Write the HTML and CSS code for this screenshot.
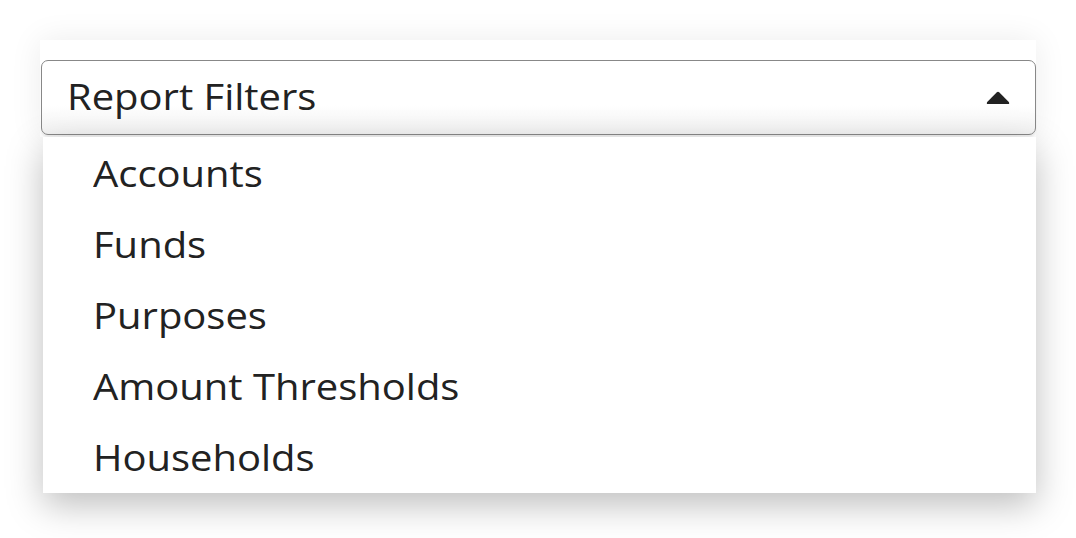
FILE: index.html
```html
<!DOCTYPE html>
<html lang="en">
<head>
<meta charset="UTF-8">
<meta name="viewport" content="width=device-width, initial-scale=1.0">
<title>Report Filters</title>
<link rel="stylesheet" href="styles.css">
</head>
<body>

<div class="filter-panel">
    <div class="filter-head">
        <div class="filter-select">
            <span class="filter-label wide">Report Filters</span>
            <svg class="caret" width="24" height="14" viewBox="0 0 24 14">
                <path d="M10.6 1.4 Q12 0 13.4 1.4 L22.8 11 Q24 13 22 13 L2 13 Q0 13 1.2 11 Z" fill="#222"/>
            </svg>
        </div>
    </div>
    <ul class="filter-menu">
        <li><span class="wide">Accounts</span></li>
        <li><span class="wide">Funds</span></li>
        <li><span class="wide">Purposes</span></li>
        <li><span class="wide">Amount Thresholds</span></li>
        <li><span class="wide">Households</span></li>
    </ul>
</div>

</body>
</html>
```

FILE: styles.css
```css
body {
    margin: 0;
    padding: 40px 0 46px 40px;
    background: #fff;
    font-family: "Open Sans", "Noto Sans", sans-serif;
    color: #222;
}
.filter-panel {
    width: 996px;
}
.filter-head {
    padding: 20px 0 2px 1px;
    background: #fff;
    box-shadow: 0 0 30px rgba(0, 0, 0, 0.08);
}
.filter-select {
    display: flex;
    align-items: center;
    justify-content: space-between;
    box-sizing: border-box;
    height: 75px;
    padding: 0 25px 0 25px;
    border: 1px solid #888;
    border-radius: 7px;
    background: linear-gradient(#fff 60%, #f3f3f3);
    box-shadow: 0 2px 2px rgba(0, 0, 0, 0.07);
}
.filter-label {
    font-size: 36px;
    margin-bottom: 2px;
}
.wide {
    display: inline-block;
    transform: scaleX(1.11);
    transform-origin: left center;
}
.caret {
    display: block;
}
.filter-menu {
    margin: 0 0 0 3px;
    padding: 1px 0 0 50px;
    list-style: none;
    background: #fff;
    box-shadow: 0 12px 34px rgba(0, 0, 0, 0.26);
}
.filter-menu li {
    font-size: 36px;
    line-height: 71px;
}
```
